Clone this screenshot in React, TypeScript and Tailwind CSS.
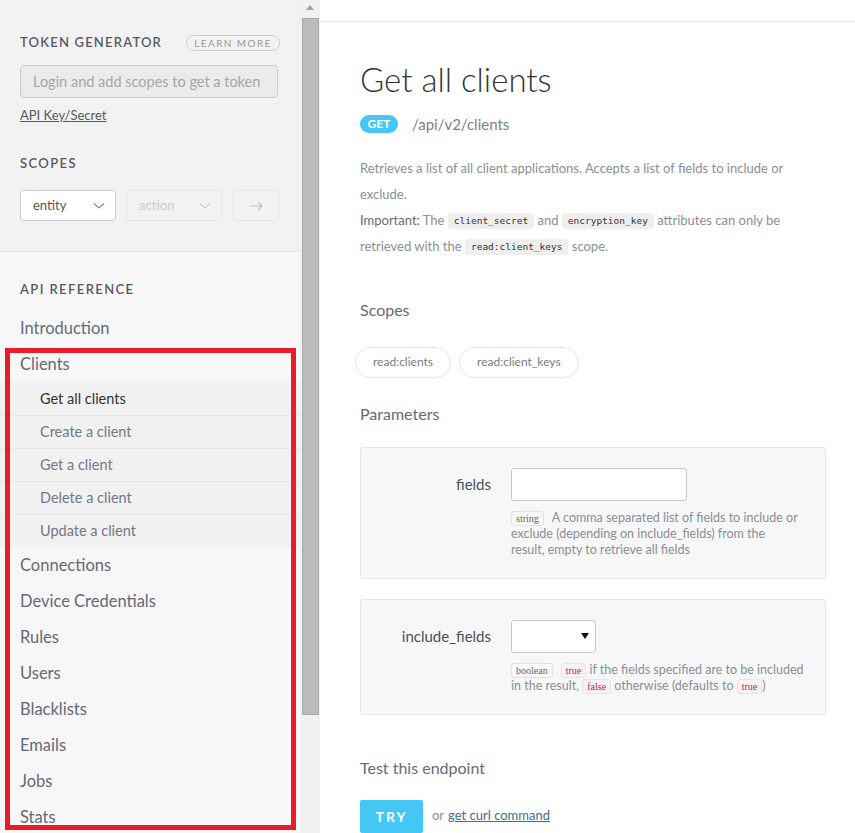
import React from "react";

const font = { fontFamily: "Lato, 'Open Sans', sans-serif" };

function Code({ children }: { children: React.ReactNode }) {
  return (
    <span className="inline-block rounded-[3px] bg-[#eeeeee] px-[6px] leading-[16px] align-[1px] text-[9.5px] text-[#333] [font-family:'DejaVu_Sans_Mono',monospace]">
      {children}
    </span>
  );
}

function Tag({ children, red }: { children: React.ReactNode; red?: boolean }) {
  return (
    <span
      className={
        "inline-block rounded-[3px] border px-[4px] leading-[13px] text-[10px] [font-family:'Liberation_Serif',serif] " +
        (red ? "border-[#f0e0e4] bg-[#f9f2f4] text-[#c7254e]" : "border-[#e2e2e2] bg-[#f9f9f9] text-[#666]")
      }
    >
      {children}
    </span>
  );
}

const subItems = ["Get all clients", "Create a client", "Get a client", "Delete a client", "Update a client"];
const navAfter = ["Connections", "Device Credentials", "Rules", "Users", "Blacklists", "Emails", "Jobs", "Stats"];

export default function App() {
  return (
    <div className="relative flex h-[833px] w-[855px] overflow-hidden bg-white" style={font}>
      {/* Sidebar */}
      <div className="flex w-[300px] shrink-0 flex-col bg-[#f7f7f7]">
        <div className="border-b border-[#e6e6e6] bg-[#f2f2f2] px-5 pt-[33px] pb-[30px]">
          <div className="flex h-5 items-center justify-between">
            <span className="text-[13px] font-semibold tracking-[1.2px] text-[#555a66]">TOKEN GENERATOR</span>
            <span className="flex h-4 w-[94px] items-center justify-center rounded-full border border-[#cfcfcf] text-[10px] tracking-[1.4px] text-[#9a9a9a]">
              LEARN MORE
            </span>
          </div>
          <div className="mt-3 flex h-[33px] w-[258px] items-center overflow-hidden whitespace-nowrap rounded-[4px] border border-[#cccccc] bg-[#ebebeb] px-3 text-[14.5px] text-[#a6a6a6]">
            Login and add scopes to get a token
          </div>
          <div className="mt-[9px] h-4 text-[13px] leading-4 text-[#555a66] underline">API Key/Secret</div>
          <div className="mt-[30px] h-5 text-[13px] font-semibold leading-5 tracking-[1.4px] text-[#555a66]">SCOPES</div>
          <div className="mt-[17px] flex gap-[10px]">
            <div className="flex h-[31px] w-[96px] items-center justify-between rounded-[3px] border border-[#cccccc] bg-white pl-3 pr-[10px] text-[13px] text-[#555]">
              entity
              <svg width="12" height="8" viewBox="0 0 12 8"><path d="M1 1.5 L6 6 L11 1.5" fill="none" stroke="#888" strokeWidth="1.2" /></svg>
            </div>
            <div className="flex h-[31px] w-[96px] items-center justify-between rounded-[3px] border border-[#e6e6e6] bg-[#f2f2f2] pl-3 pr-[10px] text-[13px] text-[#cccccc]">
              action
              <svg width="12" height="8" viewBox="0 0 12 8"><path d="M1 1.5 L6 6 L11 1.5" fill="none" stroke="#ccc" strokeWidth="1.2" /></svg>
            </div>
            <div className="flex h-[31px] w-[47px] items-center justify-center rounded-[3px] border border-[#e6e6e6] bg-[#f2f2f2]">
              <svg width="14" height="10" viewBox="0 0 14 10"><path d="M0.5 5 H13 M9 1 L13 5 L9 9" fill="none" stroke="#c4c4c4" strokeWidth="1.2" /></svg>
            </div>
          </div>
        </div>
        <div className="pt-[27px]">
          <div className="h-5 px-5 text-[13px] font-semibold leading-5 tracking-[1.4px] text-[#555a66]">API REFERENCE</div>
          <div className="mt-[11px] flex h-9 items-center px-5 text-[16.5px] text-[#656a76]">Introduction</div>
          <div className="flex h-9 items-center px-5 text-[16.5px] text-[#656a76]">Clients</div>
          <div className="bg-[#f1f1f1]">
            {subItems.map((s, i) => (
              <div
                key={s}
                className={
                  "flex h-[33px] items-center pl-10 text-[14.5px] " +
                  (i > 0 ? "border-t border-[#e6e6e6] " : "") +
                  (i === 0 ? "text-[#333]" : "text-[#737885]")
                }
              >
                {s}
              </div>
            ))}
          </div>
          {navAfter.map((n) => (
            <div key={n} className="flex h-9 items-center px-5 text-[16.5px] text-[#656a76]">
              {n}
            </div>
          ))}
        </div>
      </div>

      {/* Scrollbar */}
      <div className="flex w-[20px] shrink-0 flex-col items-center bg-[#f1f1f1] pt-[5px]">
        <svg width="8" height="5" viewBox="0 0 8 5"><path d="M0 5 L4 0 L8 5 Z" fill="#a3a3a3" /></svg>
        <div className="mt-[8px] h-[697px] w-[17px] border border-[#a9a9a9] bg-[#bcbcbc]" />
      </div>

      {/* Main */}
      <div className="flex min-w-0 flex-1 flex-col">
        <div className="h-[22px] shrink-0 border-b border-[#e8e8e8]" />
        <div className="pl-10 pr-[29px]">
          <h1 className="mt-[37px] text-[33px] font-light leading-[40px] text-[#333]">Get all clients</h1>
          <div className="mt-[14px] flex items-center">
            <span className="flex h-[18px] w-[38px] items-center justify-center rounded-full bg-[#44c7f4] text-[12px] font-bold text-white">GET</span>
            <span className="ml-[14px] text-[15px] text-[#7a7f8a]">/api/v2/clients</span>
          </div>
          <div className="mt-[19px] w-[440px] text-[13px] leading-[26px] text-[#8a8e98]">
            <p>Retrieves a list of all client applications. Accepts a list of fields to include or exclude.</p>
            <p>
              <span className="text-[#666a75]">Important:</span> The <Code>client_secret</Code> and{" "}
              <Code>encryption_key</Code> attributes can only be retrieved with the <Code>read:client_keys</Code> scope.
            </p>
          </div>

          <h2 className="mt-[39px] text-[16px] leading-6 text-[#656a76]">Scopes</h2>
          <div className="-ml-[5px] mt-[25px] flex gap-2">
            <span className="flex h-[31px] items-center rounded-full border border-[#e6e6e6] px-[17px] text-[12px] text-[#767b86]">read:clients</span>
            <span className="flex h-[31px] items-center rounded-full border border-[#e6e6e6] px-[17px] text-[12px] text-[#767b86]">read:client_keys</span>
          </div>

          <h2 className="mt-[24px] text-[16px] leading-6 text-[#656a76]">Parameters</h2>
          <div className="mt-[21px] flex gap-5 rounded-[3px] border border-[#e6e6e6] bg-[#f7f7f7] pt-5 pb-5 pr-5">
            <div className="flex h-[33px] w-[130px] shrink-0 items-center justify-end text-[15px] text-[#4a4f5a]">fields</div>
            <div className="flex-1">
              <div className="h-[33px] w-[176px] rounded-[3px] border border-[#c8c8c8] bg-white" />
              <div className="mt-[9px] w-[288px] text-[12.5px] leading-4 text-[#8a8e98]">
                <Tag>string</Tag>
                <span className="ml-[8px]">A comma separated list of fields to include or exclude (depending on include_fields) from the result, empty to retrieve all fields</span>
              </div>
            </div>
          </div>

          <div className="mt-5 flex gap-5 rounded-[3px] border border-[#e6e6e6] bg-[#f7f7f7] pt-5 pb-5 pr-5">
            <div className="flex h-[33px] w-[130px] shrink-0 items-center justify-end text-[15px] text-[#4a4f5a]">include_fields</div>
            <div className="flex-1">
              <div className="flex h-[33px] w-[85px] items-center justify-end rounded-[3px] border border-[#c8c8c8] bg-white pr-[6px]">
                <svg width="8" height="6" viewBox="0 0 8 6"><path d="M0 0 H8 L4 6 Z" fill="#111" /></svg>
              </div>
              <div className="mt-[9px] w-[295px] text-[12.5px] leading-4 text-[#8a8e98]">
                <Tag>boolean</Tag>
                <span className="ml-[8px]"><Tag red>true</Tag> if the fields specified are to be included in the result, <Tag red>false</Tag> otherwise (defaults to <Tag red>true</Tag>)</span>
              </div>
            </div>
          </div>

          <h2 className="mt-[41px] text-[16px] leading-6 text-[#656a76]">Test this endpoint</h2>
          <div className="mt-5 flex items-center">
            <span className="flex h-[33px] w-[63px] items-center justify-center rounded-[2px] bg-[#44c7f4] text-[14px] font-bold tracking-[2px] text-white">TRY</span>
            <span className="ml-[9px] text-[13px] text-[#8a8e98]">or </span>
            <span className="ml-[4px] text-[13px] text-[#3b6e8f] underline">get curl command</span>
          </div>
        </div>
      </div>

      {/* annotation box */}
      <div className="pointer-events-none absolute left-[5px] top-[348px] h-[482px] w-[291px] border-[5px] border-[#ea1c2a]" />
    </div>
  );
}
